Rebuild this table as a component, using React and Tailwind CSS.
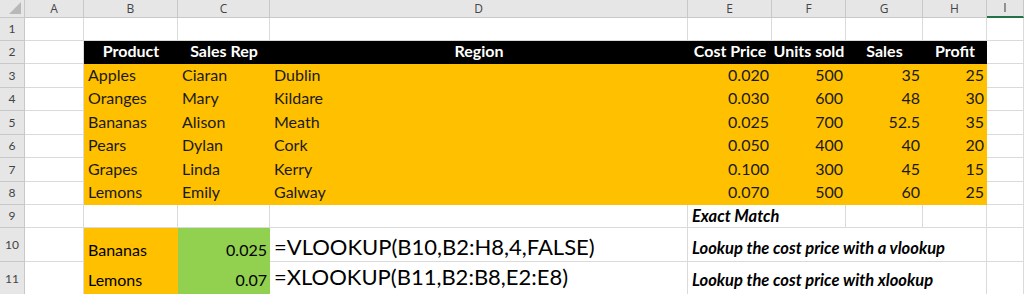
import React from 'react';

const cols = [
  { id: '', w: 'w-[25px]' },
  { id: 'A', w: 'w-[59px]' },
  { id: 'B', w: 'w-[94px]' },
  { id: 'C', w: 'w-[92px]' },
  { id: 'D', w: 'w-[418px]' },
  { id: 'E', w: 'w-[84px]' },
  { id: 'F', w: 'w-[74px]' },
  { id: 'G', w: 'w-[77px]' },
  { id: 'H', w: 'w-[64px]' },
  { id: 'I', w: 'w-[37px]' },
];

const data = [
  ['Apples', 'Ciaran', 'Dublin', '0.020', '500', '35', '25'],
  ['Oranges', 'Mary', 'Kildare', '0.030', '600', '48', '30'],
  ['Bananas', 'Alison', 'Meath', '0.025', '700', '52.5', '35'],
  ['Pears', 'Dylan', 'Cork', '0.050', '400', '40', '20'],
  ['Grapes', 'Linda', 'Kerry', '0.100', '300', '45', '15'],
  ['Lemons', 'Emily', 'Galway', '0.070', '500', '60', '25'],
];

const rowHeights = ['h-[23px]', 'h-[23px]', 'h-[24px]', 'h-[23px]', 'h-[24px]', 'h-[23px]', 'h-[24px]', 'h-[23px]', 'h-[23px]', 'h-[34px]', 'h-[34px]'];

function RowHead({ n }) {
  return (
    <div className="w-[25px] shrink-0 bg-[#e6e6e6] border-r border-b border-[#c8c8c8] flex items-center justify-center text-[12px] text-[#444]">
      {n}
    </div>
  );
}

function Cell({ w, className = '', children }) {
  return <div className={`${w} shrink-0 flex items-end px-[4px] whitespace-nowrap ${className}`}>{children}</div>;
}

const grid = 'border-r border-b border-[#dadada]';

export default function App() {
  return (
    <div className="w-[1024px] h-[294px] overflow-hidden bg-white text-black" style={{ fontFamily: 'Lato, "Open Sans", sans-serif' }}>
      {/* column headers */}
      <div className="flex h-[18px]" style={{ fontFamily: '"Open Sans", sans-serif' }}>
        <div className="w-[25px] shrink-0 bg-[#e6e6e6] border-r border-b border-[#c8c8c8] relative overflow-hidden">
          <div className="absolute right-[3px] bottom-[3px] w-0 h-0 border-l-[12px] border-l-transparent border-b-[12px] border-b-[#b8b8b8]" />
        </div>
        {cols.slice(1).map((c) => (
          <div
            key={c.id}
            className={`${c.w} shrink-0 bg-[#e6e6e6] border-r border-[#c8c8c8] flex items-center justify-center text-[12px] text-[#444] ${c.id === 'I' ? 'border-b-2 border-b-[#217346] bg-[#d9d9d9]' : 'border-b'}`}
          >
            {c.id}
          </div>
        ))}
      </div>

      {/* row 1 */}
      <div className={`flex ${rowHeights[0]}`}>
        <RowHead n={1} />
        {cols.slice(1).map((c) => (
          <Cell key={c.id} w={c.w} className={grid} />
        ))}
      </div>

      {/* row 2 headers */}
      <div className={`flex ${rowHeights[1]}`}>
        <RowHead n={2} />
        <Cell w="w-[59px]" className={grid} />
        <div className="flex bg-black text-white font-bold text-[16px]">
          {['Product', 'Sales Rep', 'Region', 'Cost Price', 'Units sold', 'Sales', 'Profit'].map((t, i) => (
            <div key={t} className={`${cols[i + 2].w} shrink-0 flex items-end justify-center pb-[1px] whitespace-nowrap`}>
              {t}
            </div>
          ))}
        </div>
        <Cell w="w-[37px]" className={grid} />
      </div>

      {/* rows 3-8 */}
      {data.map((r, ri) => (
        <div key={ri} className={`flex ${rowHeights[ri + 2]}`}>
          <RowHead n={ri + 3} />
          <Cell w="w-[59px]" className={grid} />
          <div className="flex bg-[#ffc000] text-[16px] text-[#1a1a1a]">
            {r.map((t, i) => (
              <Cell key={i} w={cols[i + 2].w} className={`pb-[1px] ${i > 2 ? 'justify-end pr-[3px]' : ''}`}>
                {t}
              </Cell>
            ))}
          </div>
          <Cell w="w-[37px]" className={grid} />
        </div>
      ))}

      {/* row 9 */}
      <div className={`flex ${rowHeights[8]}`}>
        <RowHead n={9} />
        <Cell w="w-[59px]" className={grid} />
        <Cell w="w-[94px]" className={grid} />
        <Cell w="w-[92px]" className={grid} />
        <Cell w="w-[418px]" className={grid} />
        <Cell w="w-[158px]" className={`${grid} font-bold italic text-[16.5px] leading-[22px]`}>Exact Match</Cell>
        <Cell w="w-[77px]" className={grid} />
        <Cell w="w-[64px]" className={grid} />
        <Cell w="w-[37px]" className={grid} />
      </div>

      {/* row 10 */}
      <div className={`flex ${rowHeights[9]}`}>
        <RowHead n={10} />
        <Cell w="w-[59px]" className={grid} />
        <Cell w="w-[94px]" className="bg-[#ffc000] text-[16px]">Bananas</Cell>
        <Cell w="w-[92px]" className="bg-[#92d050] text-[16px] justify-end pr-[3px]">0.025</Cell>
        <Cell w="w-[418px]" className={`${grid} text-[22px] leading-[28px]`}>=VLOOKUP(B10,B2:H8,4,FALSE)</Cell>
        <Cell w="w-[299px]" className={`${grid} font-bold italic text-[16.5px]`}>Lookup the cost price with a vlookup</Cell>
        <Cell w="w-[37px]" className={grid} />
      </div>

      {/* row 11 */}
      <div className={`flex ${rowHeights[10]}`}>
        <RowHead n={11} />
        <Cell w="w-[59px]" className={grid} />
        <Cell w="w-[94px]" className="bg-[#ffc000] text-[16px] pb-[4px]">Lemons</Cell>
        <Cell w="w-[92px]" className="bg-[#92d050] text-[16px] justify-end pr-[3px] pb-[4px]">0.07</Cell>
        <Cell w="w-[418px]" className={`${grid} text-[22px] pb-[2px]`}>=XLOOKUP(B11,B2:B8,E2:E8)</Cell>
        <Cell w="w-[299px]" className={`${grid} font-bold italic text-[16.5px] pb-[2px]`}>Lookup the cost price with xlookup</Cell>
        <Cell w="w-[37px]" className={grid} />
      </div>
    </div>
  );
}
